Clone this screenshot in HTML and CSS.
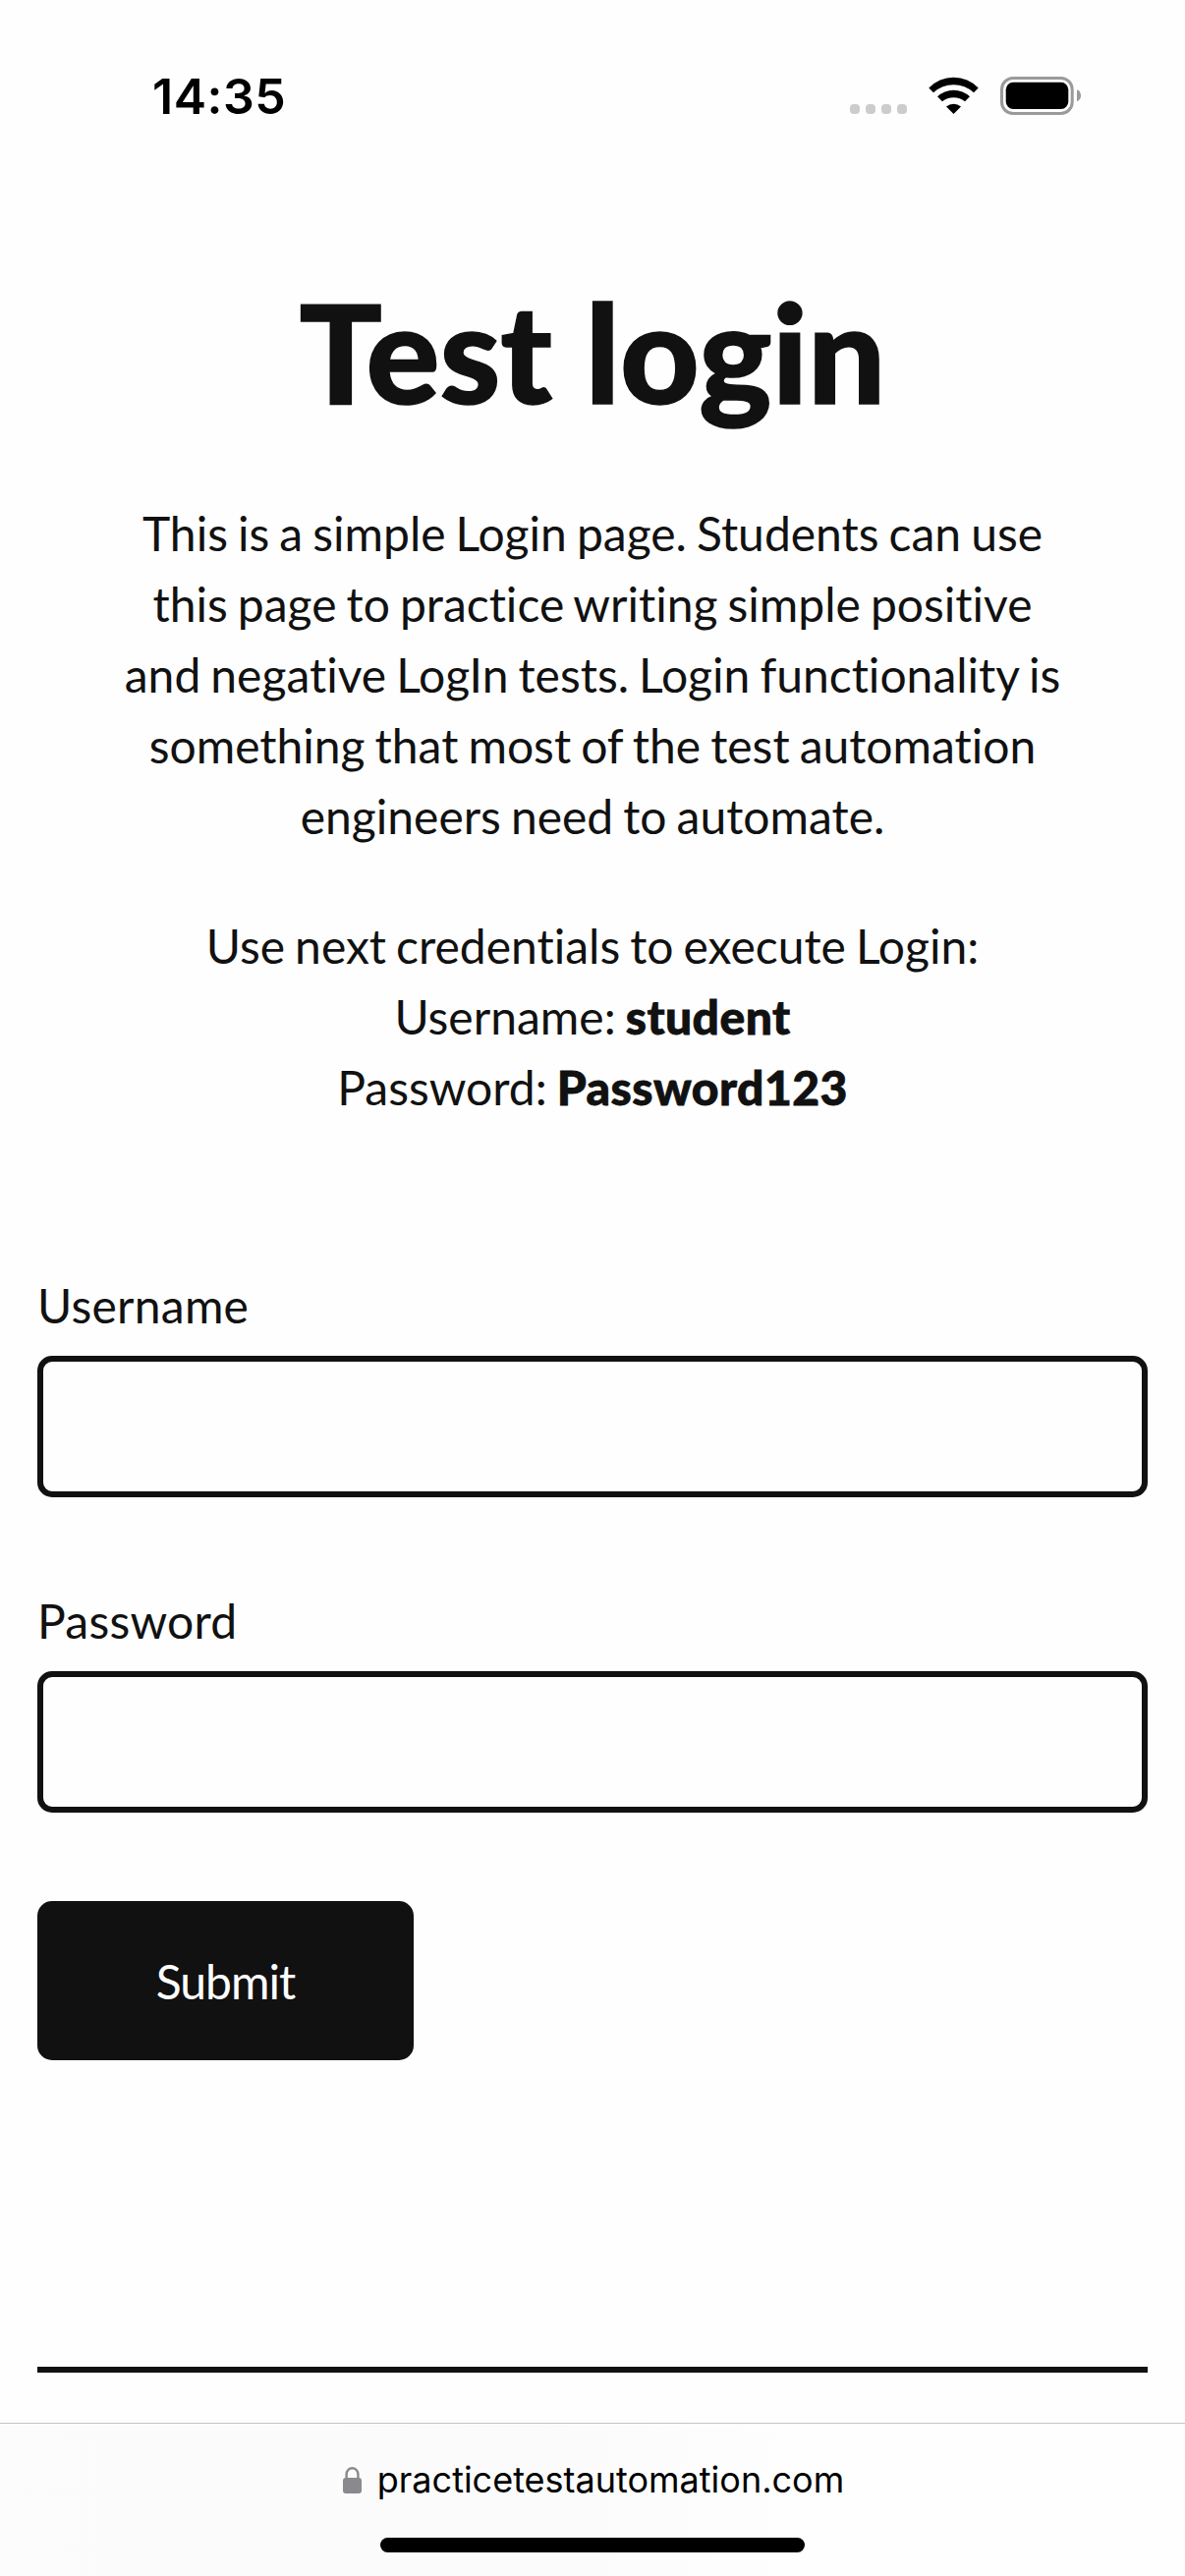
FILE: index.html
```html
<!DOCTYPE html>
<html lang="en">
<head>
<meta charset="utf-8">
<title>Test Login | Practice Test Automation</title>
<link rel="stylesheet" href="styles.css">
</head>
<body>
<header class="status">
  <span class="time">14:35</span>
  <svg class="indicators" width="240" height="44" viewBox="0 0 240 44">
    <g fill="#ccc"><rect x="3" y="31" width="10" height="10" rx="4"/><rect x="19" y="31" width="10" height="10" rx="4"/><rect x="35" y="31" width="10" height="10" rx="4"/><rect x="51" y="31" width="10" height="10" rx="4"/></g>
    <path d="M83.300 14.500A34.800 34.800 0 0 1 133.700 14.500L129 19.300A30 30 0 0 0 88 19.300Z"/>
    <path d="M92 23.300A24 24 0 0 1 125 23.300L120 28.300A18.500 18.500 0 0 0 97 28.300Z"/>
    <path d="M101 33.500A11.500 11.500 0 0 1 116 33.500L108.500 41Z"/>
    <rect x="157.500" y="4.500" width="71.700" height="36" rx="11.500" fill="none" stroke="#9a9a9a" stroke-width="3"/>
    <rect x="161.700" y="8.700" width="63.600" height="27.300" rx="7.500"/>
    <path d="M234 16.300Q238 18 238 22.300T234 28.300Z" fill="#9a9a9a"/>
  </svg>
</header>
<main class="page">
  <h1>Test login</h1>
  <p class="intro">This is a simple Login page. Students can use<br>this page to practice writing simple positive<br>and negative LogIn tests. Login functionality is<br>something that most of the test automation<br>engineers need to automate.</p>
  <p class="credentials">Use next credentials to execute Login:<br>Username: <b>student</b><br>Password: <b>Password123</b></p>
  <form class="form">
    <label class="field">Username<input class="input" type="text"></label>
    <label class="field">Password<input class="input" type="password"></label>
    <button class="submit" type="button">Submit</button>
  </form>
  <hr class="divider">
</main>
<footer class="browser">
  <div class="address">
    <svg width="19" height="27" viewBox="0 0 19 27"><rect y="11" width="19" height="16" rx="3" fill="#8a8a8e"/><path d="M3.600 13V7.500a5.900 6.300 0 0 1 11.800 0V13" fill="none" stroke="#8a8a8e" stroke-width="2.400"/></svg>
    <span>practicetestautomation.com</span>
  </div>
  <div class="home"></div>
</footer>
</body>
</html>
```
FILE: styles.css
```css
* { box-sizing: border-box; }
body { margin: 0; width: 1206px; height: 2622px; display: flex; flex-direction: column; background: #fefefe; color: #111; font-family: Lato, sans-serif; font-variant-ligatures: none; overflow: hidden; }
.status { height: 196px; padding: 75px 104px 0 155px; display: flex; justify-content: space-between; color: #000; }
.time { font: 600 50px/46px Inter, sans-serif; letter-spacing: 0.5px; }
.page { flex: 1; padding: 71px 38px 0; }
h1 { margin: 0; font-size: 140px; font-weight: 900; line-height: 180px; text-align: center; -webkit-text-stroke: 1.5px #111; }
p { margin: 0; font-size: 48px; line-height: 72px; text-align: center; word-spacing: -2.25px; }
b { font-weight: 900; letter-spacing: 0.45px; -webkit-text-stroke: 0.8px #111; }
.intro { padding-top: 60px; }
.credentials { padding-top: 60px; }
.form { padding-top: 150px; }
.field { display: block; font-size: 48px; line-height: 72px; margin-bottom: 90px; letter-spacing: 0.25px; }
.input { display: block; width: 100%; height: 144px; margin-top: 15px; border: 6px solid #111; border-radius: 15px; background: #fefefe; }
.submit { display: block; width: 383px; height: 162px; border: 0; border-radius: 15px; background: #111; color: #fff; font: 48px Lato, sans-serif; letter-spacing: -1px; }
.divider { margin: 312px 0 0; border: 0; height: 6px; background: #111; }
.browser { height: 156px; border-top: 1px solid #c4c4c4; background: linear-gradient(to right, #fcfcfc, #fbfbfb 45%, #fefefe 68%); display: flex; flex-direction: column; align-items: center; color: #000; }
.address { height: 114px; margin-bottom: 2px; padding-left: 2px; display: flex; align-items: center; gap: 16px; font: 36px Inter, sans-serif; }
.home { width: 432px; height: 15px; border-radius: 8px; background: #000; }
```
